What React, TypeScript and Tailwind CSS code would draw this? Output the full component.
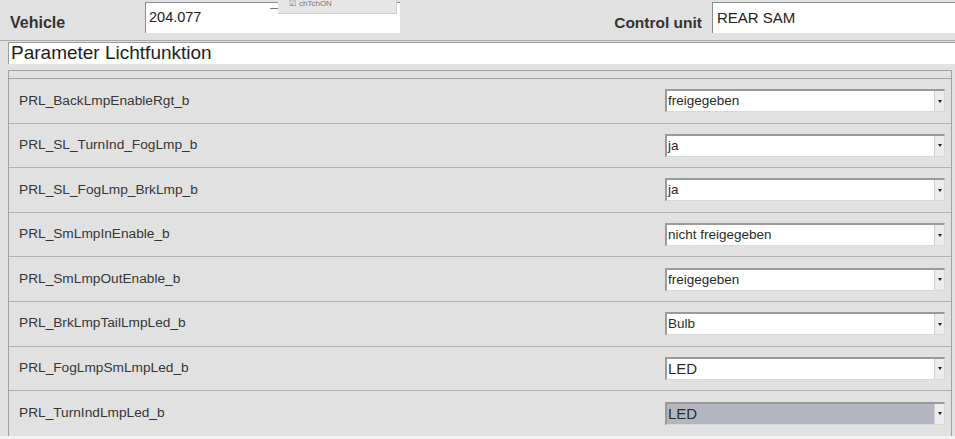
const rows = [
  { name: "PRL_BackLmpEnableRgt_b", value: "freigegeben" },
  { name: "PRL_SL_TurnInd_FogLmp_b", value: "ja" },
  { name: "PRL_SL_FogLmp_BrkLmp_b", value: "ja" },
  { name: "PRL_SmLmpInEnable_b", value: "nicht freigegeben" },
  { name: "PRL_SmLmpOutEnable_b", value: "freigegeben" },
  { name: "PRL_BrkLmpTailLmpLed_b", value: "Bulb" },
  { name: "PRL_FogLmpSmLmpLed_b", value: "LED", big: true },
  { name: "PRL_TurnIndLmpLed_b", value: "LED", big: true, active: true },
];

const Select = ({ value, big, active }: { value: string; big?: boolean; active?: boolean }) => (
  <div
    className={`flex h-[23px] w-[280px] items-center border-t-2 border-l-2 border-t-[#9a9a9a] border-l-[#9a9a9a] border-b border-r border-b-[#d8d8d8] border-r-[#d8d8d8] ${
      active ? "bg-[#b3b5c0]" : "bg-white"
    }`}
  >
    <span
      className={`flex-1 pl-[1px] text-[#2a2a2a] ${big ? "text-[15px]" : "text-[13.5px]"}`}
    >
      {value}
    </span>
    <div className="flex h-full w-[10px] items-center justify-center border-l border-[#d0d0d0] bg-[#ececec]">
      <div className="h-0 w-0 border-x-[2px] border-t-[3px] border-x-transparent border-t-[#222]" />
    </div>
  </div>
);

export default function App() {
  return (
    <div
      className="relative flex h-[439px] w-[955px] flex-col overflow-hidden bg-[#e1e1e1] text-[#2c2c2c]"
      style={{ fontFamily: '"Liberation Sans", Arial, sans-serif' }}
    >
      {/* top bar */}
      <div className="flex h-[41px] shrink-0 items-start border-b border-[#a9a9a9] pt-[2px]">
        <div className="w-[145px] pl-[10px] pt-[9px] text-[16px] font-bold text-[#333]">Vehicle</div>
        <div className="flex h-[31px] w-[255px] items-center border-l border-t border-[#8c8c8c] bg-white pl-[3px] text-[14.5px] text-[#222]">
          204.077
        </div>
        <div className="flex-1" />
        <div className="pr-[10px] pt-[9px] text-[15.5px] font-bold text-[#333]">Control unit</div>
        <div className="flex h-[31px] w-[243px] items-center border-l border-t border-[#8c8c8c] bg-white pl-[4px] text-[15px] text-[#222]">
          REAR SAM
        </div>
      </div>

      {/* cut-off popup */}
      <div className="absolute left-[270px] top-[8px] h-px w-[8px] bg-[#777]" />
      <div className="absolute left-[278px] top-0 flex h-[14px] w-[119px] items-start border-b border-r border-[#cfcfcf] bg-[#e6e6e6] pl-[11px] text-[8px] leading-[8px] text-[#777]">
        <span className="mr-[3px]">☑</span>chTchON
      </div>

      {/* title field */}
      <div className="ml-[8px] mt-[1px] flex h-[22px] shrink-0 items-center border-l border-t border-[#9c9c9c] bg-white pl-[2px] text-[19px] text-[#1e1e1e]">
        Parameter Lichtfunktion
      </div>

      {/* parameter table */}
      <div className="ml-[8px] mr-[3px] mt-[6px] shrink-0 border-l border-r border-t border-[#a3a3a3]">
        <div className="h-[8px] border-b border-[#a3a3a3]" />
        {rows.map((r, i) => (
          <div
            key={r.name}
            className={`flex h-[44.6px] items-center pr-[6px] ${
              i < rows.length - 1 ? "border-b border-[#b0b0b0]" : ""
            }`}
          >
            <div className="flex-1 pl-[10px] text-[13.7px] text-[#363636]">{r.name}</div>
            <Select value={r.value} big={r.big} active={r.active} />
          </div>
        ))}
      </div>
      <div className="flex-1 bg-[#f3f3f3]" />
    </div>
  );
}
